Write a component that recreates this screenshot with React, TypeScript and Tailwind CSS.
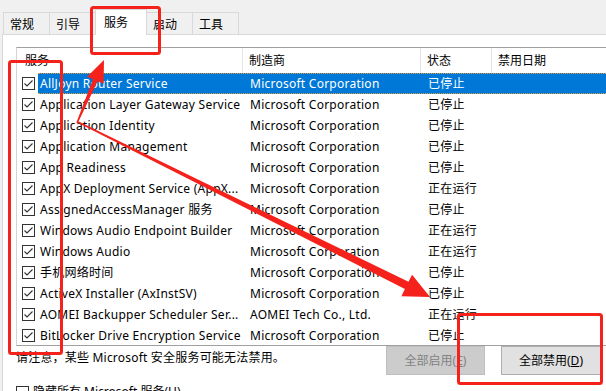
type Row = { name: string; maker: string; status: string };

const rows: Row[] = [
  { name: "AllJoyn Router Service", maker: "Microsoft Corporation", status: "已停止" },
  { name: "Application Layer Gateway Service", maker: "Microsoft Corporation", status: "已停止" },
  { name: "Application Identity", maker: "Microsoft Corporation", status: "已停止" },
  { name: "Application Management", maker: "Microsoft Corporation", status: "已停止" },
  { name: "App Readiness", maker: "Microsoft Corporation", status: "已停止" },
  { name: "AppX Deployment Service (AppX...", maker: "Microsoft Corporation", status: "正在运行" },
  { name: "AssignedAccessManager 服务", maker: "Microsoft Corporation", status: "已停止" },
  { name: "Windows Audio Endpoint Builder", maker: "Microsoft Corporation", status: "正在运行" },
  { name: "Windows Audio", maker: "Microsoft Corporation", status: "正在运行" },
  { name: "手机网络时间", maker: "Microsoft Corporation", status: "已停止" },
  { name: "ActiveX Installer (AxInstSV)", maker: "Microsoft Corporation", status: "已停止" },
  { name: "AOMEI Backupper Scheduler Ser...", maker: "AOMEI Tech Co., Ltd.", status: "正在运行" },
  { name: "BitLocker Drive Encryption Service", maker: "Microsoft Corporation", status: "已停止" },
];

function CheckBox({ checked }: { checked: boolean }) {
  return (
    <span className="w-[13px] h-[13px] border border-[#333333] bg-white flex items-center justify-center shrink-0">
      {checked && (
        <svg width="11" height="11" viewBox="0 0 11 11">
          <path d="M1.5 5.5 L4 8 L9.5 2.5" fill="none" stroke="#333333" strokeWidth="1.1" />
        </svg>
      )}
    </span>
  );
}

// 红色箭头（由细到粗）
function arrow(x1: number, y1: number, x2: number, y2: number, w0: number, w1: number, hl: number, hw: number) {
  const len = Math.hypot(x2 - x1, y2 - y1);
  const ux = (x2 - x1) / len;
  const uy = (y2 - y1) / len;
  const px = -uy;
  const py = ux;
  const bx = x2 - ux * hl;
  const by = y2 - uy * hl;
  const pts = [
    [x1 + (px * w0) / 2, y1 + (py * w0) / 2],
    [bx + (px * w1) / 2, by + (py * w1) / 2],
    [bx + px * hw, by + py * hw],
    [x2, y2],
    [bx - px * hw, by - py * hw],
    [bx - (px * w1) / 2, by - (py * w1) / 2],
    [x1 - (px * w0) / 2, y1 - (py * w0) / 2],
  ];
  return pts.map((p) => p[0].toFixed(1) + "," + p[1].toFixed(1)).join(" ");
}

const tabs = ["常规", "引导", "服务", "启动", "工具"];

export default function App() {
  return (
    <div
      className="relative w-[606px] h-[391px] overflow-hidden bg-[#f0f0f0] text-[12px] text-black flex flex-col"
      style={{ fontFamily: "'Noto Sans', 'Noto Sans CJK SC', sans-serif" }}
    >
      {/* 标签栏 */}
      <div className="h-[34px] flex items-end pl-[3px] shrink-0">
        {tabs.map((t) =>
          t === "服务" ? (
            <div
              key={t}
              className="relative z-10 -ml-[1px] -mb-[1px] w-[52px] h-[26px] bg-white border border-b-0 border-[#d9d9d9] pl-[8px] pt-[5px] leading-[16px]"
            >
              {t}
            </div>
          ) : (
            <div
              key={t}
              className="-ml-[1px] first:ml-0 w-[47px] h-[22px] bg-[#f0f0f0] border border-b-0 border-[#d9d9d9] pl-[6px] pt-[4px] leading-[16px]"
            >
              {t}
            </div>
          )
        )}
      </div>

      {/* 面板 */}
      <div className="flex-1 ml-[2px] bg-white border-l border-t border-[#d9d9d9] pl-[13px] pt-[12px] flex flex-col">
        <div className="w-[620px] border border-r-0 border-[#a0a0a0] border-l-[#d4d4d4]">
          {/* 表头 */}
          <div className="h-[25px] flex items-center">
            <div className="w-[226px] pl-[8px] h-full flex items-center border-r border-[#e5e5e5]">服务</div>
            <div className="w-[178px] pl-[6px] h-full flex items-center border-r border-[#e5e5e5]">制造商</div>
            <div className="w-[71px] pl-[6px] h-full flex items-center border-r border-[#e5e5e5]">状态</div>
            <div className="pl-[6px] h-full flex items-center">禁用日期</div>
          </div>
          {/* 行 */}
          <div className="h-[272px] overflow-hidden tracking-[0.25px]">
            {rows.map((r, i) => {
              const sel = i === 0;
              return (
                <div key={i} className="h-[21px] flex items-center">
                  <div className="w-[21px] pl-[5px] flex items-center shrink-0">
                    <CheckBox checked />
                  </div>
                  <div
                    className={
                      "flex-1 h-full flex items-center " +
                      (sel ? "bg-[#0078d7] text-white border-y border-dotted border-[#e0a040]" : "")
                    }
                  >
                    <div className="w-[205px] pl-[2px] whitespace-nowrap overflow-hidden">{r.name}</div>
                    <div className="w-[178px] pl-[7px] whitespace-nowrap">{r.maker}</div>
                    <div className="w-[71px] pl-[7px] whitespace-nowrap">{r.status}</div>
                  </div>
                </div>
              );
            })}
          </div>
        </div>

        {/* 提示与按钮 */}
        <div className="w-[585px] flex items-start justify-between">
          <div className="pt-[4px] leading-[16px] tracking-[0.2px]">请注意，某些 Microsoft 安全服务可能无法禁用。</div>
          <div className="flex gap-[16px]">
            <div className="w-[99px] h-[29px] bg-[#cccccc] border border-[#bfbfbf] text-[#838383] flex items-center justify-center">
              全部启用(<span className="underline">E</span>)
            </div>
            <div className="w-[100px] h-[29px] bg-[#e1e1e1] border border-[#adadad] flex items-center justify-center">
              全部禁用(<span className="underline">D</span>)
            </div>
          </div>
        </div>

        <div className="mt-[8px] flex items-center gap-[4px]">
          <CheckBox checked={false} />
          <span>隐藏所有 Microsoft 服务(H)</span>
        </div>
      </div>

      {/* 红色标注 */}
      <svg className="absolute inset-0 pointer-events-none" width="606" height="391" viewBox="0 0 606 391">
        <g fill="none" stroke="#f5221b" strokeWidth="3">
          <rect x="91.5" y="7.5" width="68" height="46" rx="2" />
          <rect x="9.5" y="61.5" width="52" height="292" rx="2" />
          <rect x="458.5" y="314.5" width="143" height="69" rx="2" />
        </g>
        <polygon fill="#f5221b" points={arrow(77, 123, 104, 60, 1.5, 5, 22, 9)} />
        <polygon fill="#f5221b" points={arrow(78, 122, 430, 297, 1.5, 8, 26, 12)} />
      </svg>
    </div>
  );
}
